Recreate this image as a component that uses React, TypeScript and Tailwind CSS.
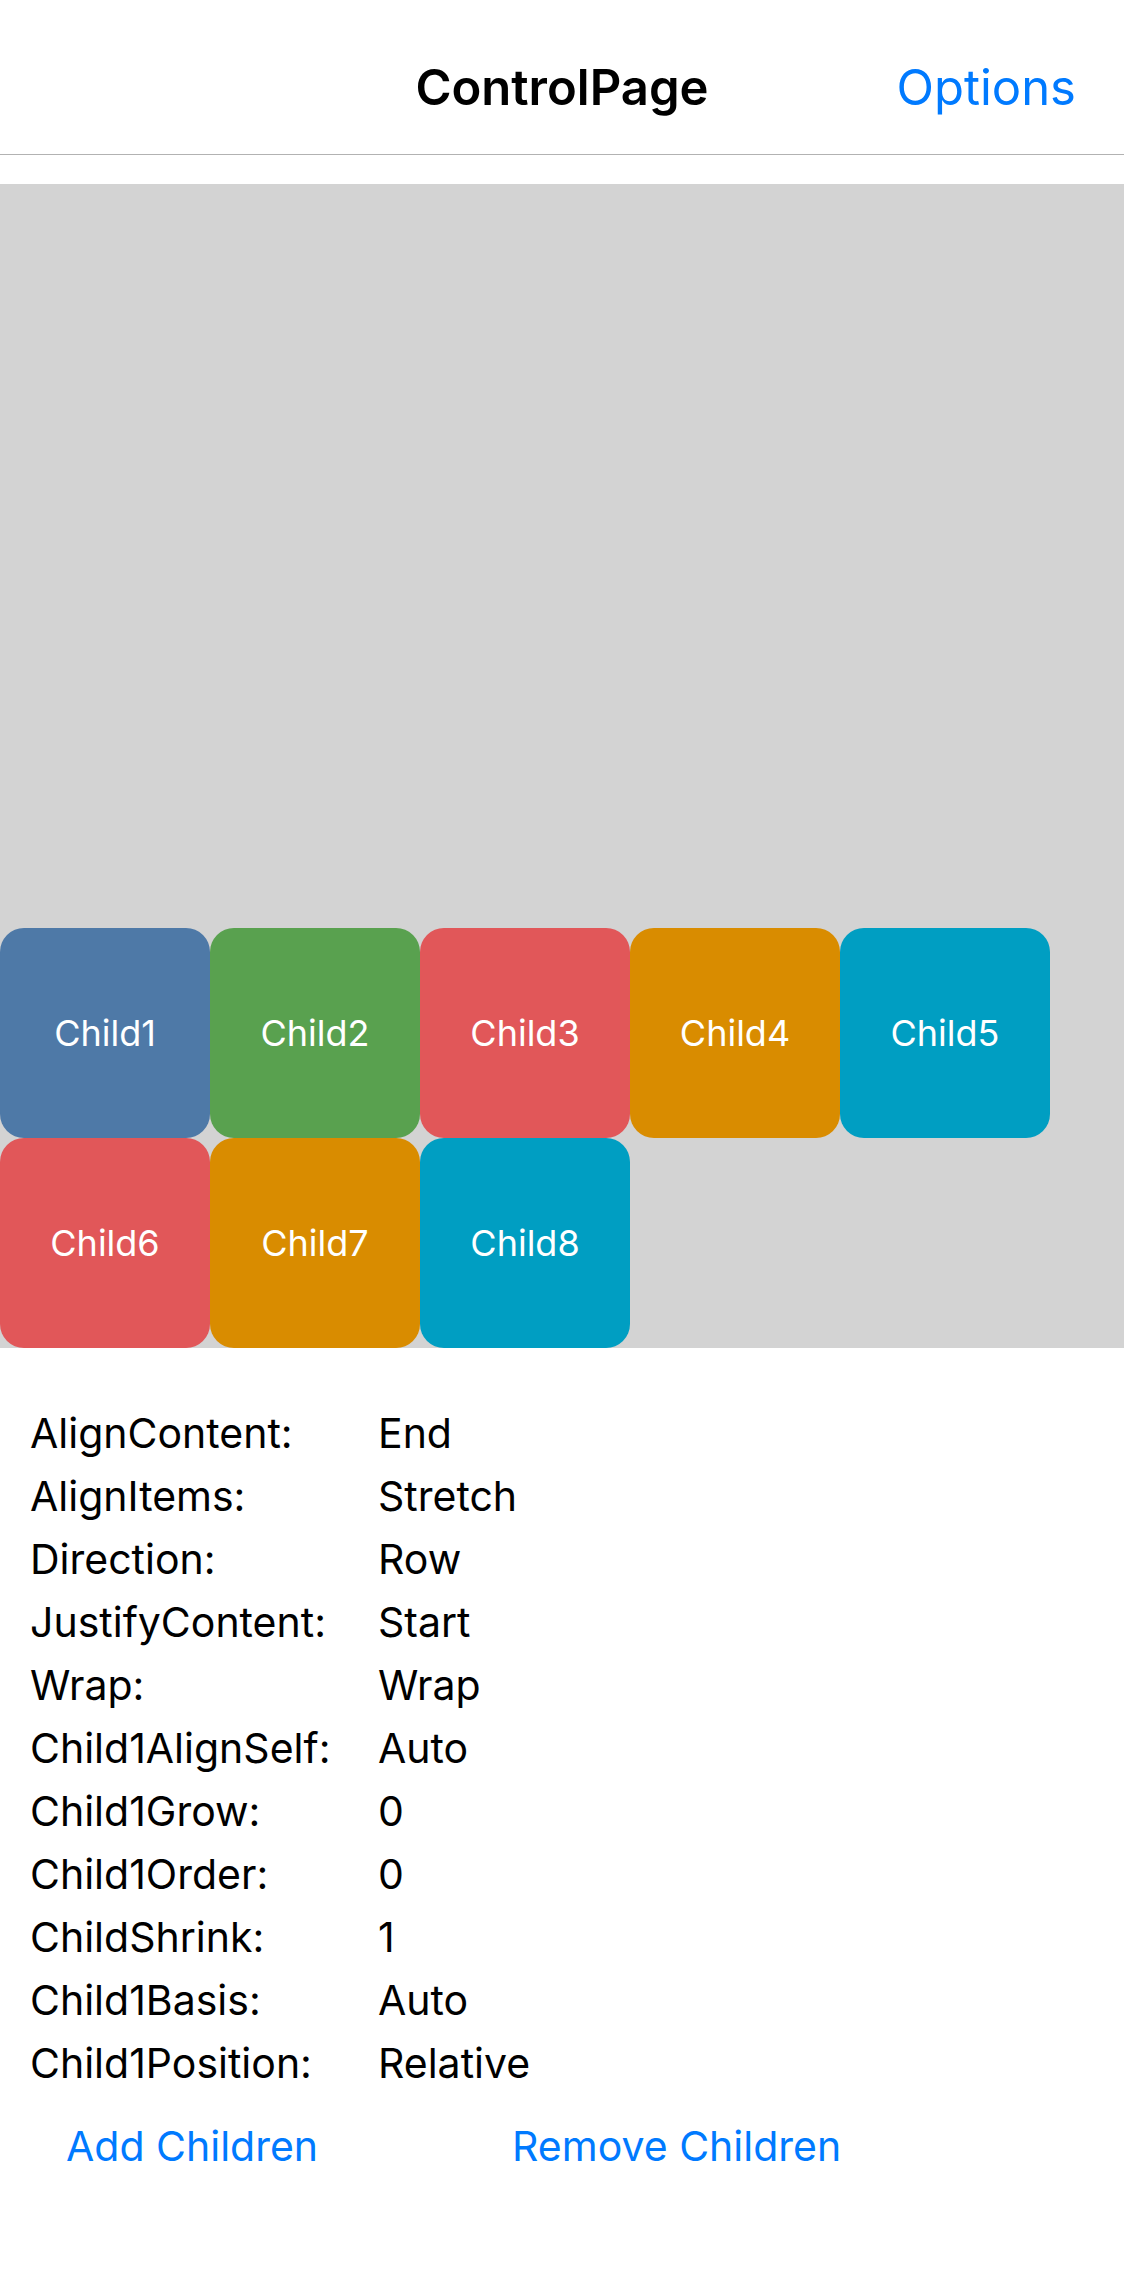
const tiles = [
  { name: 'Child1', color: 'bg-[#4e79a7]' },
  { name: 'Child2', color: 'bg-[#59a14f]' },
  { name: 'Child3', color: 'bg-[#e15759]' },
  { name: 'Child4', color: 'bg-[#d98c00]' },
  { name: 'Child5', color: 'bg-[#009ec2]' },
  { name: 'Child6', color: 'bg-[#e15759]' },
  { name: 'Child7', color: 'bg-[#d98c00]' },
  { name: 'Child8', color: 'bg-[#009ec2]' },
];

const settings: [string, string][] = [
  ['AlignContent:', 'End'],
  ['AlignItems:', 'Stretch'],
  ['Direction:', 'Row'],
  ['JustifyContent:', 'Start'],
  ['Wrap:', 'Wrap'],
  ['Child1AlignSelf:', 'Auto'],
  ['Child1Grow:', '0'],
  ['Child1Order:', '0'],
  ['ChildShrink:', '1'],
  ['Child1Basis:', 'Auto'],
  ['Child1Position:', 'Relative'],
];

export default function App() {
  return (
    <div className="flex min-h-screen flex-col bg-white font-['Inter',sans-serif] text-black">
      <header className="grid grid-cols-[1fr_auto_1fr] items-center border-b border-[#b2b2b2] px-12 pt-[51px] pb-[29px]">
        <h1 className="col-start-2 text-[49px] leading-[74px] font-semibold">ControlPage</h1>
        <button type="button" className="justify-self-end text-[49px] leading-[74px] text-[#007aff]">
          Options
        </button>
      </header>

      <main className="flex flex-1 flex-col pt-[29px]">
        <section className="flex min-h-[1164px] flex-wrap content-end bg-[#d3d3d3]">
          {tiles.map((tile) => (
            <div
              key={tile.name}
              className={`flex size-[210px] items-center justify-center rounded-3xl text-[36px] text-white ${tile.color}`}
            >
              {tile.name}
            </div>
          ))}
        </section>

        <dl className="mt-[54px] px-[30px] text-[41px] leading-[63px]">
          {settings.map(([label, value]) => (
            <div key={label} className="grid grid-cols-[348px_1fr]">
              <dt>{label}</dt>
              <dd>{value}</dd>
            </div>
          ))}
        </dl>

        <div className="mt-5 flex gap-[194px] px-[66px] text-[41px] leading-[63px] text-[#007aff]">
          <button type="button">Add Children</button>
          <button type="button">Remove Children</button>
        </div>
      </main>
    </div>
  );
}
